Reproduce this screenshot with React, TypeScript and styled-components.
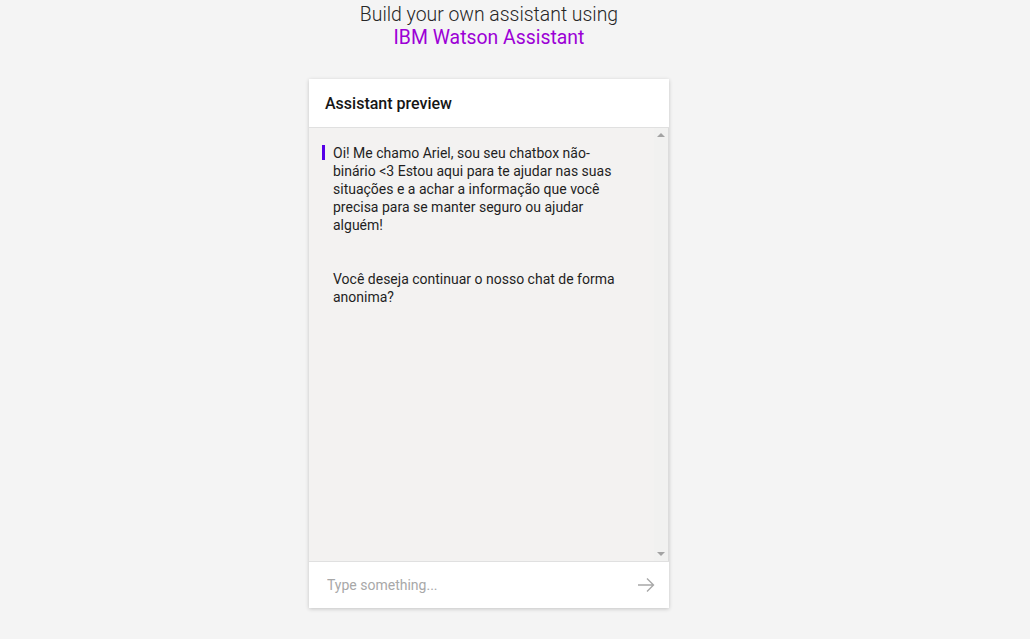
import styled, { createGlobalStyle } from "styled-components";

const GlobalStyle = createGlobalStyle`
  html, body {
    margin: 0;
    padding: 0;
    background: #f4f4f4;
    font-family: Roboto, "Noto Sans", "Liberation Sans", sans-serif;
  }
`;

const Page = styled.div`
  display: flex;
  flex-direction: column;
  align-items: center;
  padding: 3px 52px 0 0;
  min-height: 100vh;
  box-sizing: border-box;
`;

const Intro = styled.div`
  text-align: center;
  font-size: 19.4px;
  font-weight: 300;
  line-height: 23px;
  color: #262626;
`;

const Brand = styled.div`
  color: #9c00d6;
  font-weight: 400;
`;

const Card = styled.div`
  margin-top: 30px;
  width: 360px;
  height: 529px;
  background: #ffffff;
  box-shadow: 0 1px 4px rgba(0, 0, 0, 0.2);
  display: flex;
  flex-direction: column;
`;

const Header = styled.div`
  height: 48px;
  border-bottom: 1px solid #e0e0e0;
  display: flex;
  align-items: center;
  padding: 0 16px;
  font-size: 16px;
  font-weight: 500;
  color: #161616;
`;

const Body = styled.div`
  flex: 1;
  display: flex;
  background: #f3f2f1;
  min-height: 0;
`;

const Messages = styled.div`
  flex: 1;
  padding: 16px 0 0 24px;
`;

const ScrollTrack = styled.div`
  width: 14px;
  background: #f1f1f0;
  border-right: 1px solid #dcdcdc;
  display: flex;
  flex-direction: column;
  justify-content: space-between;
  align-items: center;
  padding: 5px 0 5px;
`;

const Arrow = styled.span<{ $down?: boolean }>`
  width: 0;
  height: 0;
  border-left: 4px solid transparent;
  border-right: 4px solid transparent;
  ${({ $down }) =>
    $down ? "border-top: 4px solid #a3a3a3;" : "border-bottom: 4px solid #a3a3a3;"}
`;

const Bubble = styled.div`
  position: relative;
  max-width: 292px;
  font-size: 14px;
  line-height: 18px;
  color: #1f1f1f;

  &::before {
    content: "";
    position: absolute;
    left: -11px;
    top: 1px;
    width: 3px;
    height: 15px;
    background: #5600e8;
  }

  p {
    margin: 0;
  }

  p + p {
    margin-top: 36px;
  }
`;

const Composer = styled.div`
  height: 46px;
  border-top: 1px solid #e0e0e0;
  display: flex;
  align-items: center;
  padding: 0 14px 0 18px;
`;

const Input = styled.input`
  flex: 1;
  border: none;
  outline: none;
  background: transparent;
  font-family: inherit;
  font-size: 14px;
  color: #161616;
  padding: 0;

  &::placeholder {
    color: #a8a8a8;
  }
`;

const SendButton = styled.button`
  border: none;
  background: none;
  padding: 0;
  display: flex;
  color: #a8a8a8;
`;

export default function App() {
  return (
    <>
      <GlobalStyle />
      <Page>
        <Intro>
          Build your own assistant using
          <Brand>IBM Watson Assistant</Brand>
        </Intro>
        <Card>
          <Header>Assistant preview</Header>
          <Body>
            <Messages>
              <Bubble>
                <p>
                  Oi! Me chamo Ariel, sou seu chatbox não-binário &lt;3 Estou aqui para te ajudar
                  nas suas situações e a achar a informação que você precisa para se manter seguro
                  ou ajudar alguém!
                </p>
                <p>Você deseja continuar o nosso chat de forma anonima?</p>
              </Bubble>
            </Messages>
            <ScrollTrack>
              <Arrow />
              <Arrow $down />
            </ScrollTrack>
          </Body>
          <Composer>
            <Input placeholder="Type something..." />
            <SendButton aria-label="Send">
              <svg width="18" height="18" viewBox="0 0 18 18" fill="none" stroke="currentColor" strokeWidth="1.4">
                <path d="M1 9h15.5M10 2.5 16.5 9 10 15.5" />
              </svg>
            </SendButton>
          </Composer>
        </Card>
      </Page>
    </>
  );
}
